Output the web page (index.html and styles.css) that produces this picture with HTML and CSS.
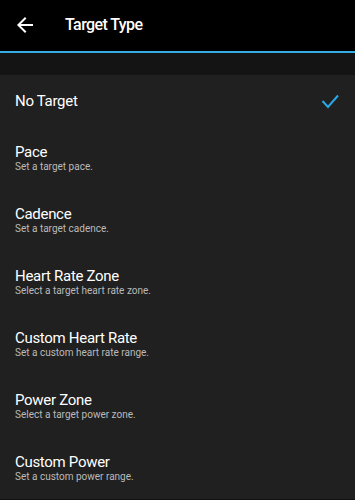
FILE: index.html
```html
<!DOCTYPE html>
<html>
<head>
<meta charset="utf-8">
<link rel="stylesheet" href="styles.css">
</head>
<body>
<div class="app">
  <header class="topbar">
    <svg class="back" width="24" height="24" viewBox="0 0 24 24"><path d="M20 11H7.83l5.59-5.59L12 4l-8 8 8 8 1.41-1.41L7.83 13H20v-2z" fill="#fff"/></svg>
    <h1 class="title">Target Type</h1>
  </header>
  <div class="accent"></div>
  <div class="spacer"></div>
  <ul class="list">
    <li class="item single">
      <span class="name">No Target</span>
      <svg class="check" width="18" height="16" viewBox="0 0 18 16"><polyline points="1.5,8 7,14 17,2.5" fill="none" stroke="#2aa8e6" stroke-width="2"/></svg>
    </li>
    <li class="item"><div><div class="name">Pace</div><div class="desc">Set a target pace.</div></div></li>
    <li class="item"><div><div class="name">Cadence</div><div class="desc">Set a target cadence.</div></div></li>
    <li class="item"><div><div class="name">Heart Rate Zone</div><div class="desc">Select a target heart rate zone.</div></div></li>
    <li class="item"><div><div class="name">Custom Heart Rate</div><div class="desc">Set a custom heart rate range.</div></div></li>
    <li class="item"><div><div class="name">Power Zone</div><div class="desc">Select a target power zone.</div></div></li>
    <li class="item"><div><div class="name">Custom Power</div><div class="desc">Set a custom power range.</div></div></li>
  </ul>
</div>
</body>
</html>
```
FILE: styles.css
```css
html, body {
  margin: 0;
  padding: 0;
  background: #111;
  font-family: Roboto, "Liberation Sans", sans-serif;
  color: #fff;
}
.app {
  width: 355px;
  height: 500px;
  overflow: hidden;
  display: flex;
  flex-direction: column;
  background: #111;
}
.topbar {
  height: 51px;
  background: #000;
  display: flex;
  align-items: center;
  padding-left: 13px;
  box-sizing: border-box;
}
.back {
  display: block;
  margin-top: -1px;
}
.title {
  margin: -1px 0 0 28px;
  font-size: 16px;
  font-weight: 500;
  line-height: 20px;
  letter-spacing: -0.6px;
}
.accent {
  height: 2px;
  background: #34ade2;
}
.spacer {
  height: 22px;
  background: #141414;
}
.list {
  list-style: none;
  margin: 0;
  padding: 0;
  background: #202020;
}
.item {
  height: 62px;
  display: flex;
  align-items: center;
  justify-content: space-between;
  padding: 0 15px;
  box-sizing: border-box;
}
.item.single {
  height: 52px;
  padding-right: 16px;
}
.name {
  font-size: 15px;
  line-height: 18px;
  color: #fff;
  letter-spacing: -0.3px;
}
.desc {
  font-size: 10px;
  line-height: 12px;
  color: #bababa;
}
.check {
  display: block;
}
```
